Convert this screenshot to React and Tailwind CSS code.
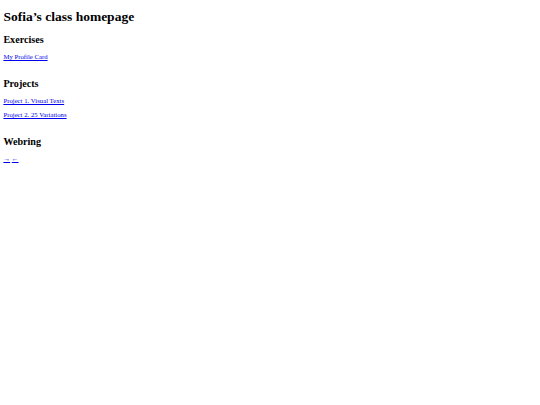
export default function App() {
  const serif = { fontFamily: '"Liberation Serif", "Times New Roman", serif' };
  return (
    <div className="px-[3.375px] text-black bg-white" style={serif}>
      <h1 className="text-[13.5px] font-bold leading-[normal] my-[9.045px]">Sofia’s class homepage</h1>
      <h2 className="text-[10.125px] font-bold leading-[normal] my-[8.4px]">Exercises</h2>
      <p className="text-[6.75px] leading-[normal] my-[7.2px]"><a href="#" className="text-[#0000ee] underline">My Profile Card</a></p>
      <h2 className="text-[10.125px] font-bold leading-[normal] mt-[17.4px] mb-[8.4px]">Projects</h2>
      <p className="text-[6.75px] leading-[normal] my-[7.2px]"><a href="#" className="text-[#0000ee] underline">Project 1. Visual Texts</a></p>
      <p className="text-[6.75px] leading-[normal] my-[7.2px]"><a href="#" className="text-[#0000ee] underline">Project 2. 25 Variations</a></p>
      <h2 className="text-[10.125px] font-bold leading-[normal] mt-[17.4px] mb-[8.4px]">Webring</h2>
      <p className="text-[6.75px] leading-[normal] my-[7.2px]"><a href="#" className="text-[#0000ee] underline">→</a> <a href="#" className="text-[#0000ee] underline">←</a></p>
    </div>
  );
}
